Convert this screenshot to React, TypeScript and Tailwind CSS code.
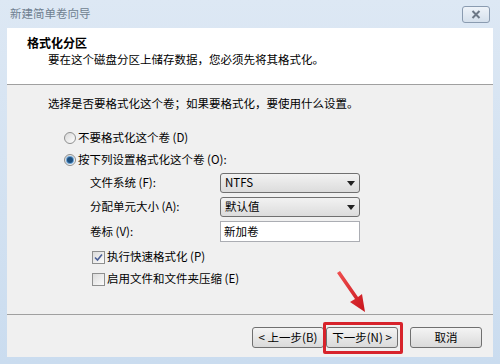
const font = { fontFamily: '"Noto Sans CJK SC", "Liberation Sans", sans-serif' };

function Radio({ checked }: { checked?: boolean }) {
  return (
    <span className="w-[12px] h-[12px] rounded-full border border-[#8e8f8f] bg-gradient-to-br from-[#d8d8d8] to-[#ffffff] flex items-center justify-center mr-[2px] shrink-0">
      {checked && <span className="w-[6px] h-[6px] rounded-full bg-[#1d4f7e] ring-1 ring-[#6aa3d6]" />}
    </span>
  );
}

function Check({ checked }: { checked?: boolean }) {
  return (
    <span className="w-[13px] h-[13px] border border-[#8e8f8f] bg-gradient-to-br from-[#dcdcdc] to-[#fbfbfb] flex items-center justify-center mr-[2px] shrink-0">
      {checked && (
        <svg width="9" height="9" viewBox="0 0 9 9">
          <path d="M1 4.5 L3.5 7 L8 1.5" fill="none" stroke="#4a5f97" strokeWidth="1.6" />
        </svg>
      )}
    </span>
  );
}

function Combo({ value }: { value: string }) {
  return (
    <div className="w-[140px] h-[20px] rounded-[3px] border border-[#707070] bg-gradient-to-b from-[#f2f2f2] to-[#dcdcdc] flex items-center justify-between px-[4px]">
      <span className="text-[11.5px] text-black">{value}</span>
      <svg width="8" height="5" viewBox="0 0 8 5">
        <path d="M0 0 H8 L4 5 Z" fill="#222" />
      </svg>
    </div>
  );
}

function Btn({ label }: { label: string }) {
  return (
    <div className="w-[72px] h-[21px] rounded-[3px] border border-[#707070] bg-gradient-to-b from-[#f4f4f4] to-[#dadada] flex items-center justify-center text-[11.5px] text-black">
      {label}
    </div>
  );
}

export default function App() {
  return (
    <div
      className="relative w-[500px] h-[364px] overflow-hidden bg-gradient-to-b from-[#dde8f4] to-[#cadcef] flex flex-col"
      style={font}
    >
      {/* title bar */}
      <div className="h-[28px] flex items-center justify-between pl-[10px] pr-[10px] shrink-0">
        <span className="text-[11.5px] text-[#6f7f90]">新建简单卷向导</span>
        <div className="w-[28px] h-[17px] rounded-[3px] border border-[#8a9bb0] bg-gradient-to-b from-[#eef3f9] to-[#d5e0ec] flex items-center justify-center">
          <svg width="10" height="9" viewBox="0 0 10 9">
            <path d="M1.5 1 L8.5 8 M8.5 1 L1.5 8" stroke="#6d7886" strokeWidth="2" />
          </svg>
        </div>
      </div>

      {/* client */}
      <div className="mx-[7px] h-[329px] flex flex-col bg-[#f0f0f0]">
        <div className="h-[57px] bg-white border-b border-[#a0a0a0] pl-[20px] pt-[6px] shrink-0">
          <div className="text-[12px] font-bold text-black leading-[17px]">格式化分区</div>
          <div className="pl-[21px] text-[11.5px] text-black leading-[16px]">
            要在这个磁盘分区上储存数据，您必须先将其格式化。
          </div>
        </div>

        <div className="flex-1 pl-[41px] pt-[10px] text-[11.5px] text-black">
          <div className="h-[16px] leading-[16px]">选择是否要格式化这个卷；如果要格式化，要使用什么设置。</div>
          <div className="mt-[16px] pl-[16px]">
            <div className="h-[22px] flex items-center">
              <Radio />
              <span>不要格式化这个卷 (D)</span>
            </div>
            <div className="h-[22px] flex items-center">
              <Radio checked />
              <span>按下列设置格式化这个卷 (O):</span>
            </div>
            <div className="mt-[2px] pl-[26px] flex flex-col gap-[4px]">
              <div className="h-[20px] flex items-center">
                <span className="w-[130px]">文件系统 (F):</span>
                <Combo value="NTFS" />
              </div>
              <div className="h-[20px] flex items-center">
                <span className="w-[130px]">分配单元大小 (A):</span>
                <Combo value="默认值" />
              </div>
              <div className="h-[21px] flex items-center">
                <span className="w-[130px]">卷标 (V):</span>
                <div className="w-[140px] h-[21px] bg-white border border-[#abadb3] flex items-center px-[3px]">
                  新加卷
                </div>
              </div>
            </div>
            <div className="mt-[4px] pl-[28px]">
              <div className="h-[22px] flex items-center">
                <Check checked />
                <span>执行快速格式化 (P)</span>
              </div>
              <div className="h-[22px] flex items-center">
                <Check />
                <span>启用文件和文件夹压缩 (E)</span>
              </div>
            </div>
          </div>
        </div>

        <div className="h-[43px] border-t border-[#a0a0a0] flex items-start justify-end pt-[12px] pr-[11px] shrink-0">
          <Btn label="< 上一步(B)" />
          <div className="ml-[2px]">
            <Btn label="下一步(N) >" />
          </div>
          <div className="ml-[12px]">
            <Btn label="取消" />
          </div>
        </div>
      </div>

      {/* annotation: red box + arrow */}
      <div className="absolute left-[323px] top-[322px] w-[80px] h-[32px] border-[3px] border-[#d7232b] rounded-[2px]" />
      <svg className="absolute left-0 top-0" width="500" height="364" viewBox="0 0 500 364">
        <defs>
          <linearGradient id="ar" x1="0" y1="0" x2="1" y2="1">
            <stop offset="0" stopColor="#f05050" />
            <stop offset="1" stopColor="#c8141c" />
          </linearGradient>
        </defs>
        <path d="M337 273 L355 299 L350 302 L365 312 L362 294 L358 297 L340 271 Z" fill="url(#ar)" />
      </svg>
    </div>
  );
}
